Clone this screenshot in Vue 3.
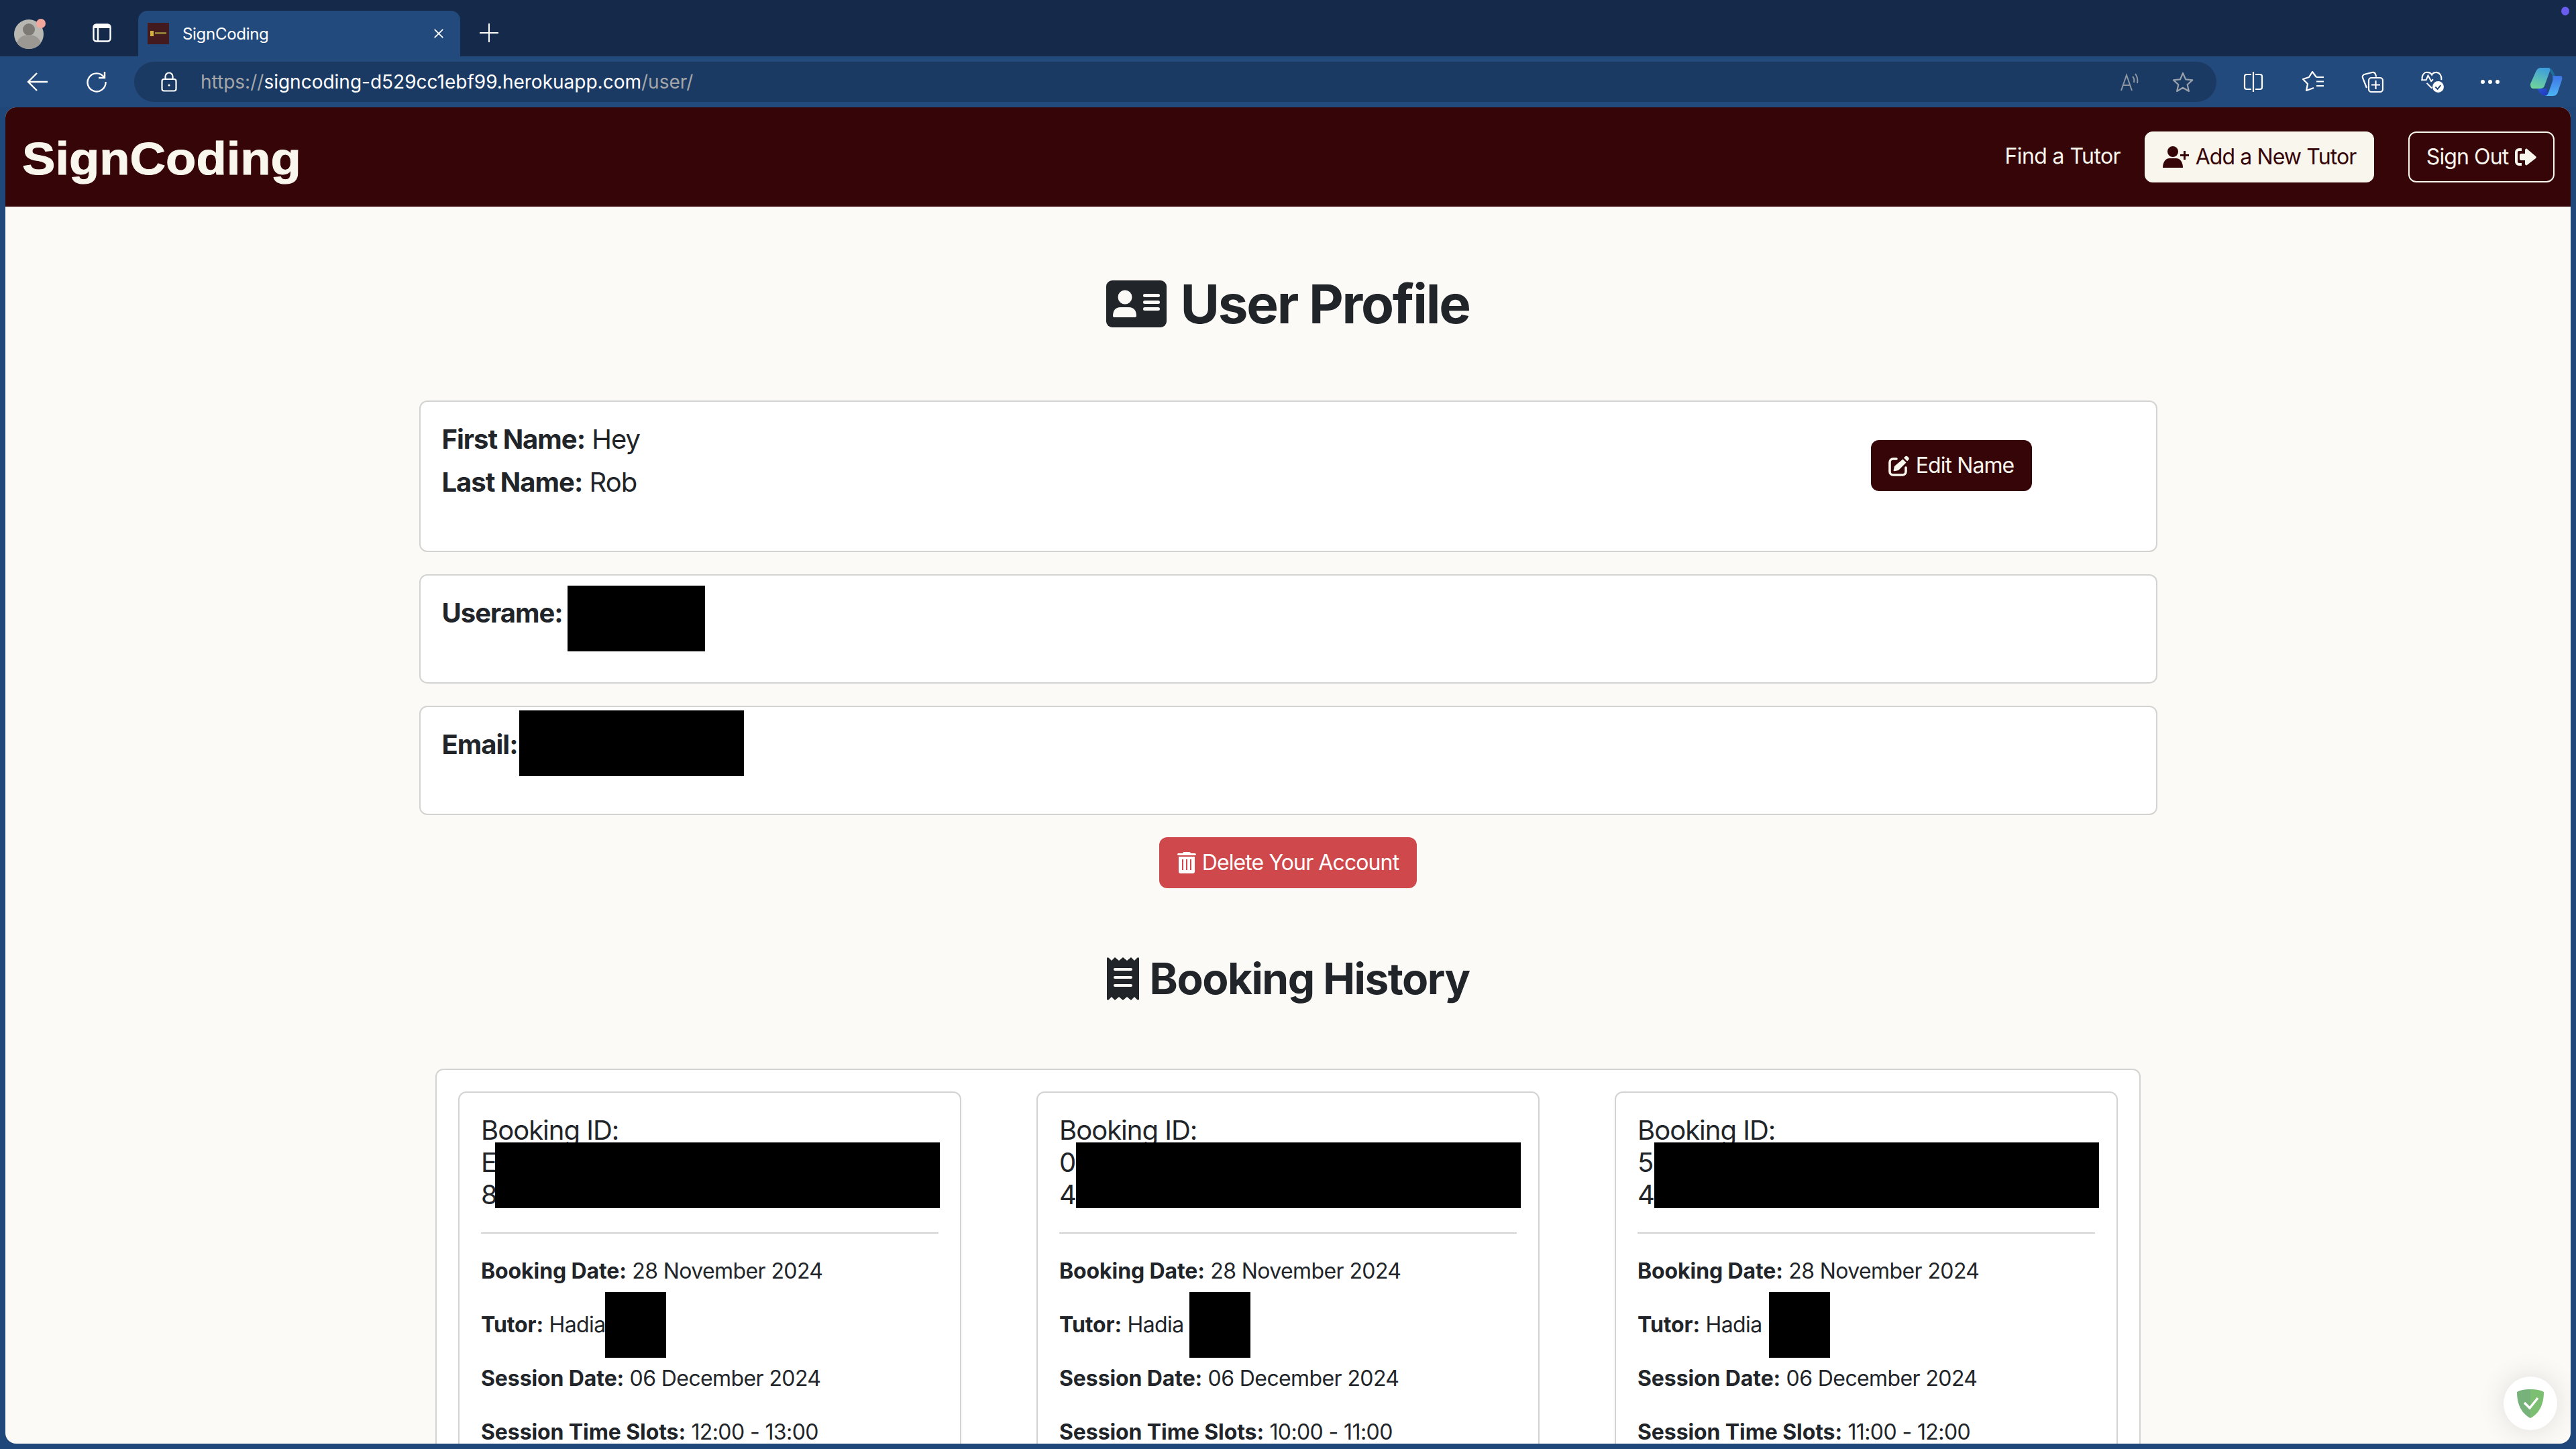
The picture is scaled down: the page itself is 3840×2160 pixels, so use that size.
<template>
  <div class="window">
    <div class="tabstrip">
      <svg class="avatar" viewBox="0 0 50 46">
        <ellipse cx="23" cy="24" rx="22" ry="22" fill="#b9b7b2" />
        <circle cx="23" cy="17" r="9" fill="#7d7a76" />
        <path d="M5 37c3-9 10-12 18-12s15 3 18 12c-4 6-11 9-18 9S9 43 5 37z" fill="#9b9893" />
        <circle cx="41" cy="8" r="7" fill="#f2a79c" />
      </svg>
      <svg class="tab-toggle" viewBox="0 0 28 28" fill="none" stroke="#fff" stroke-width="2.4">
        <rect x="1.5" y="1.5" width="25" height="25" rx="4" />
        <path d="M2 7h24v-2l-3-3H5L2 5z" fill="#fff" stroke="none" />
        <path d="M8 7v19" />
      </svg>
      <div class="tab">
        <svg class="favicon" viewBox="0 0 32 32">
          <rect width="32" height="32" fill="#431a1e" />
          <rect x="4" y="12" width="5" height="8" fill="#d2b23a" />
          <rect x="11" y="14" width="17" height="3" fill="#8f7d38" />
        </svg>
        <span class="tab-title">SignCoding</span>
        <svg class="tab-close" viewBox="0 0 18 18" stroke="#fff" stroke-width="2"><path d="M2 2l14 14M16 2L2 16" /></svg>
      </div>
      <svg class="new-tab" viewBox="0 0 28 28" stroke="#fff" stroke-width="2"><path d="M14 0v28M0 14h28" /></svg>
      <span class="purple-dot"></span>
    </div>

    <div class="toolbar">
      <svg class="tool-left" viewBox="0 0 32 30" fill="none" stroke="#fff" stroke-width="2.4">
        <path d="M31 15H3M15 2L2 15l13 13" />
      </svg>
      <svg class="tool-reload" viewBox="0 0 32 32" fill="none" stroke="#fff" stroke-width="2.4">
        <path d="M27 9A13.5 13.5 0 1 0 29.5 16" />
        <path d="M28 1v9h-9" />
      </svg>
      <div class="address">
        <svg class="lock" viewBox="0 0 24 30" fill="none" stroke="#fff" stroke-width="2.2">
          <rect x="1.5" y="11" width="21" height="17.5" rx="3" />
          <path d="M6.5 11V7a5.5 5.5 0 0 1 11 0v4" />
          <circle cx="12" cy="20" r="1.6" fill="#fff" stroke="none" />
        </svg>
        <span class="url"><span class="dim">https://</span>signcoding-d529cc1ebf99.herokuapp.com<span class="dim">/user/</span></span>
        <svg class="read-aloud" viewBox="0 0 30 28" fill="none" stroke="#8f97a3" stroke-width="2">
          <path d="M2 27L10 4l8 23M5 19h10" />
          <path d="M19 6c2 2 3 5 2 9M23 2c3 4 4 9 3 14" />
        </svg>
        <svg class="star" viewBox="0 0 32 30" fill="none" stroke="#9aa1ab" stroke-width="2.2" stroke-linejoin="round">
          <path d="M16 2l4.2 9.4 10 1-7.5 6.8 2.2 9.8-8.9-5.2-8.9 5.2 2.2-9.8L2 12.4l10-1z" />
        </svg>
      </div>
      <svg class="tool-icon split" viewBox="0 0 30 30" fill="none" stroke="#fff" stroke-width="2.2">
        <path d="M12 4H5a3 3 0 0 0-3 3v16a3 3 0 0 0 3 3h7" />
        <path d="M18 4h7a3 3 0 0 1 3 3v16a3 3 0 0 1-3 3h-7" />
        <path d="M15 0v30" />
      </svg>
      <svg class="tool-icon fav" viewBox="0 0 33 32" fill="none" stroke="#fff" stroke-width="2.2" stroke-linejoin="round">
        <path d="M21 9L15 1 10 9 1 12l7 7-2 10 11-4" />
        <path d="M21 9h11M21 15.500h11M21 22h11" />
      </svg>
      <svg class="tool-icon coll" viewBox="0 0 33 32" fill="none" stroke="#fff" stroke-width="2.2">
        <path d="M8 25L2 10c-.8-2.500.5-4.500 3-5.200l11-2.800c2.500-.6 4.500.5 5.200 3l1 3.500" />
        <rect x="11" y="10" width="21" height="21" rx="4" />
        <path d="M21.500 14v13M15 20.500h13" />
      </svg>
      <svg class="tool-icon health" viewBox="0 0 37 34" fill="none" stroke="#fff" stroke-width="2.200">
        <path d="M2 14C0 6 6 1 10 2c3 0 6 2 7 4 1-2 4-4 7-4 5 0 9 5 8 12" />
        <path d="M0 14h8l3-7 5 9 3-3" />
        <path d="M9 19l8 8" />
        <circle cx="27" cy="25" r="9" fill="#fff" stroke="none" />
        <path d="M22.500 25l3.500 3.500 5-6" stroke="#234a7c" />
      </svg>
      <span class="dots"><i></i><i></i><i></i></span>
      <svg class="copilot" viewBox="0 0 48 42">
        <defs>
          <linearGradient id="cpA" x1="0.6" y1="0" x2="0.3" y2="1">
            <stop offset="0" stop-color="#3f9fdc" />
            <stop offset="1" stop-color="#6fd49a" />
          </linearGradient>
          <linearGradient id="cpB" x1="0.5" y1="0" x2="0.5" y2="1">
            <stop offset="0" stop-color="#3f75e6" />
            <stop offset="1" stop-color="#4cb4f5" />
          </linearGradient>
          <linearGradient id="cpC" x1="0" y1="0" x2="1" y2="1">
            <stop offset="0" stop-color="#2a52d8" />
            <stop offset="1" stop-color="#2036b8" />
          </linearGradient>
        </defs>
        <path d="M26 0C31 0 34 4 37 12H33L29 5C30 2 28 0 26 0z" fill="#1f6e99" />
        <path d="M11 31H24L27 42H22C16 41 12 36 11 31z" fill="url(#cpC)" />
        <path d="M16 0H26C29 0 30 2 29 5L21 27C20 30 17 31 14 31H4C1 31 0 28 0 24L8 6C10 2 12 0 16 0z" fill="url(#cpA)" />
        <path d="M33 12H44C47 12 48 14 47 18L41 36C40 40 37 42 33 42H21C24 42 26 40 27 37L33 20C34 17 33 13 33 12z" fill="url(#cpB)" />
      </svg>
    </div>

    <div class="page">
      <nav class="navbar">
        <span class="logo">SignCoding</span>
        <div class="nav-links">
          <a class="nav-link">Find a Tutor</a>
          <a class="btn btn-light">
            <svg class="i-user-plus" viewBox="0 0 40 32" fill="currentColor">
              <circle cx="15" cy="8" r="8" />
              <path d="M0 32c0-8 4-14 10-14h10c6 0 10 6 10 14z" />
              <path d="M31 7h3v5h5v3h-5v5h-3v-5h-5v-3h5z" />
            </svg>
            Add a New Tutor
          </a>
          <a class="btn btn-outline">
            Sign Out
            <svg class="i-sign-out" viewBox="0 0 33 32" fill="currentColor">
              <path d="M11 3H7a6 6 0 0 0-6 6v14a6 6 0 0 0 6 6h4v-4H7a2 2 0 0 1-2-2V9a2 2 0 0 1 2-2h4z" />
              <path d="M19 4l13 11c1 1 1 2 0 3L19 28c-1 1-3 0-3-2v-5H10c-1 0-2-1-2-2v-6c0-1 1-2 2-2h6V6c0-2 2-3 3-2z" />
            </svg>
          </a>
        </div>
      </nav>

      <main class="content">
        <h1 class="title">
          <svg class="i-card" viewBox="0 0 90 70">
            <rect width="90" height="70" rx="9" fill="#212529" />
            <ellipse cx="28" cy="25" rx="10.500" ry="10.500" fill="#fbfaf6" />
            <path d="M10 53c0-8 4-13 11-13h13c7 0 11 5 11 13 0 1-1 2-2 2H12c-1 0-2-1-2-2z" fill="#fbfaf6" />
            <rect x="55" y="20" width="25" height="5" rx="2.500" fill="#fbfaf6" />
            <rect x="55" y="30" width="25" height="5" rx="2.500" fill="#fbfaf6" />
            <rect x="55" y="40" width="25" height="5" rx="2.500" fill="#fbfaf6" />
          </svg>
          User Profile
        </h1>

        <section class="info-card name-card">
          <div>
            <h5><strong>First Name:</strong> Hey</h5>
            <h5><strong>Last Name:</strong> Rob</h5>
          </div>
          <a class="btn btn-dark edit-btn">
            <svg class="i-edit" viewBox="0 0 32 32">
              <path d="M12 6H7a5 5 0 0 0-5 5v14a5 5 0 0 0 5 5h14a5 5 0 0 0 5-5v-6" fill="none" stroke="currentColor" stroke-width="3.600" stroke-linecap="round" />
              <path d="M25 2.500c1-1 2.500-1 3.500 0l1.500 1.500c1 1 1 2.500 0 3.500l-2 2-5-5zM21.500 6.500l5 5-11 11c-.5.5-1 .7-1.500.8l-5 1c-.8.2-1.500-.5-1.300-1.300l1-5c.1-.5.3-1 .8-1.500z" fill="currentColor" />
            </svg>
            Edit Name
          </a>
        </section>

        <section class="info-card short-card">
          <h5><strong>Userame:</strong></h5>
          <span class="redact username-redact"></span>
        </section>

        <section class="info-card short-card">
          <h5><strong>Email:</strong></h5>
          <span class="redact email-redact"></span>
        </section>

        <div class="delete-row">
          <a class="btn btn-danger">
            <svg class="i-trash" viewBox="0 0 28 32" fill="#fff">
              <path d="M10 0h8c1 0 2 1 2 2h6c1 0 2 1 2 1.500S27 5 26 5H2C1 5 0 4.500 0 3.500S1 2 2 2h6c0-1 1-2 2-2z" />
              <path fill-rule="evenodd" d="M2 7h24v22c0 2-1 3-3 3H5c-2 0-3-1-3-3zM7 11v16h2V11zM13 11v16h2V11zM19 11v16h2V11z" />
            </svg>
            Delete Your Account
          </a>
        </div>

        <h2 class="subtitle">
          <svg class="i-receipt" viewBox="0 0 48 64" fill="#212529">
            <path fill-rule="evenodd" d="M0 2c0-2 2-2 3-1l4 4 5-5 6 5 6-5 6 5 6-5 5 5 4-4c1-1 3-1 3 1v60c0 2-2 2-3 1l-4-4-5 5-6-5-6 5-6-5-6 5-5-5-4 4c-1 1-3 1-3-1zM12 16a2 2 0 0 0 0 4h24a2 2 0 0 0 0-4zM12 28a2 2 0 0 0 0 4h24a2 2 0 0 0 0-4zM12 40a2 2 0 0 0 0 4h24a2 2 0 0 0 0-4z" />
          </svg>
          Booking History
        </h2>

        <section class="history">
          <article v-for="b in bookings" :key="b.id" class="booking">
            <h5 class="booking-id">Booking ID:<br />{{ b.idStart }}<br />{{ b.idEnd }}</h5>
            <span class="redact id-redact" :style="{ left: b.idLeft + 'px' }"></span>
            <hr />
            <p><strong>Booking Date:</strong> 28 November 2024</p>
            <p><strong>Tutor:</strong> Hadia</p>
            <span class="redact tutor-redact" :style="{ left: b.tutorLeft + 'px' }"></span>
            <p><strong>Session Date:</strong> 06 December 2024</p>
            <p><strong>Session Time Slots:</strong> {{ b.slot }}</p>
          </article>
        </section>
      </main>

      <button class="shield-btn" type="button">
        <svg viewBox="0 0 40 43">
          <path d="M20 0C12 0 5 1 0 4c0 16 5 31 20 39z" fill="#76b27a" />
          <path d="M20 0c8 0 15 1 20 4 0 16-5 31-20 39z" fill="#7cbf72" />
          <path d="M11 20l8 8 12-15" fill="none" stroke="#fff" stroke-width="3.500" />
        </svg>
      </button>
    </div>
  </div>
</template>

<script setup>
const bookings = [
  { id: 1, idStart: 'E', idEnd: '8', idLeft: 53, tutorLeft: 217, slot: '12:00 - 13:00' },
  { id: 2, idStart: '0', idEnd: '4', idLeft: 57, tutorLeft: 226, slot: '10:00 - 11:00' },
  { id: 3, idStart: '5', idEnd: '4', idLeft: 57, tutorLeft: 228, slot: '11:00 - 12:00' },
]
</script>

<style>
html,
body {
  margin: 0;
  overflow: hidden;
}
</style>

<style scoped>
.window {
  width: 3840px;
  height: 2160px;
  display: flex;
  flex-direction: column;
  background: #20477a;
  font-family: Inter, "Liberation Sans", sans-serif;
  color: #212529;
  overflow: hidden;
}

.tabstrip {
  height: 84px;
  flex: none;
  display: flex;
  align-items: flex-end;
  background: #152a4b;
  position: relative;
}

.avatar {
  width: 50px;
  height: 46px;
  margin: 0 0 11px 20px;
}

.tab-toggle {
  width: 28px;
  height: 28px;
  margin: 0 0 21px 68px;
}

.tab {
  width: 480px;
  height: 68px;
  margin-left: 40px;
  border-radius: 14px 14px 0 0;
  background: #234a7c;
  display: flex;
  align-items: center;
  box-sizing: border-box;
  padding-left: 14px;
  color: #fff;
}

.favicon {
  width: 32px;
  height: 32px;
}

.tab-title {
  margin-left: 20px;
  font-size: 24px;
  letter-spacing: -0.3px;
  width: 374px;
}

.tab-close {
  width: 16px;
  height: 18px;
}

.new-tab {
  width: 28px;
  height: 28px;
  margin: 0 0 21px 29px;
}

.purple-dot {
  position: absolute;
  left: 3818px;
  top: 10px;
  width: 12px;
  height: 13px;
  border-radius: 50%;
  background: #6a5cf0;
}

.toolbar {
  height: 76px;
  flex: none;
  display: flex;
  align-items: center;
  background: #234a7c;
}

.tool-left {
  width: 32px;
  height: 30px;
  margin-left: 40px;
}

.tool-reload {
  width: 32px;
  height: 32px;
  margin-left: 56px;
}

.address {
  width: 3104px;
  height: 60px;
  margin: 0 0 0 40px;
  border-radius: 30px;
  background: #1b3a63;
  display: flex;
  align-items: center;
  box-sizing: border-box;
  padding-left: 40px;
}

.lock {
  width: 24px;
  height: 30px;
}

.url {
  margin-left: 35px;
  font-size: 28px;
  color: #fff;
  width: 2861px;
}

.dim {
  color: #a4a6a9;
}

.read-aloud {
  width: 30px;
  height: 28px;
}

.star {
  width: 32px;
  height: 30px;
  margin-left: 48px;
}

.tool-icon {
  height: 32px;
}

.split {
  width: 30px;
  margin-left: 40px;
}

.fav {
  width: 33px;
  margin-left: 58px;
}

.coll {
  width: 33px;
  margin-left: 55px;
}

.health {
  width: 37px;
  margin-left: 55px;
}

.dots {
  display: flex;
  gap: 5px;
  margin-left: 53px;
}

.dots i {
  width: 6px;
  height: 6px;
  border-radius: 50%;
  background: #fff;
}

.copilot {
  width: 48px;
  height: 42px;
  margin-left: 46px;
}

.page {
  flex: 1;
  min-height: 0;
  margin: 0 8px 8px;
  border-radius: 16px;
  background: #fbfaf6;
  overflow: hidden;
  position: relative;
}

.navbar {
  height: 148px;
  box-sizing: border-box;
  background: #360508;
  display: flex;
  align-items: center;
  justify-content: space-between;
  padding: 0 24px 0 25px;
}

.logo {
  font-family: "Liberation Sans", Arial, sans-serif;
  font-weight: 700;
  font-size: 68px;
  margin-top: 3px;
  color: #f9f6ee;
  transform: scaleX(1.09);
  transform-origin: left center;
  -webkit-text-stroke: 1px #f9f6ee;
}

.nav-links {
  display: flex;
  align-items: center;
}

.nav-link {
  font-size: 32px;
  letter-spacing: -0.6px;
  color: #f9f6ee;
  margin: 0 36px 4px 0;
}

.btn {
  height: 76px;
  box-sizing: border-box;
  display: inline-flex;
  align-items: center;
  justify-content: center;
  gap: 9px;
  font-size: 32px;
  letter-spacing: -0.9px;
  line-height: 48px;
  border-radius: 12px;
  white-space: nowrap;
}

.btn-light {
  width: 342px;
  background: #f9f6ee;
  color: #360508;
}

.btn-outline {
  width: 218px;
  margin-left: 51px;
  border: 2px solid #f9f6ee;
  color: #f9f6ee;
}

.i-user-plus {
  width: 40px;
  height: 32px;
}

.i-sign-out {
  width: 33px;
  height: 32px;
}

.content {
  padding-top: 97px;
}

.title {
  margin: 0 0 96px;
  font-size: 80px;
  line-height: 96px;
  letter-spacing: -2.200px;
  font-weight: 700;
  display: flex;
  align-items: center;
  justify-content: center;
  gap: 20px;
}

.i-card {
  width: 90px;
  height: 70px;
}

.info-card {
  width: 2591px;
  box-sizing: border-box;
  margin: 0 auto 33px;
  padding: 32px;
  background: #fff;
  border: 2px solid #d3d3d2;
  border-radius: 12px;
  position: relative;
}

h5 {
  margin: 0 0 16px;
  font-size: 40px;
  line-height: 48px;
  letter-spacing: -1px;
  font-weight: 400;
}

strong {
  font-weight: 700;
}

.name-card {
  height: 226px;
  display: flex;
  justify-content: space-between;
}

.edit-btn {
  margin: 25px 153px 0 0;
}

.btn-dark {
  width: 240px;
  background: #360508;
  color: #f9f6ee;
}

.i-edit {
  width: 32px;
  height: 32px;
}

.short-card {
  height: 163px;
}

.redact {
  position: absolute;
  background: #000;
}

.username-redact {
  left: 219px;
  top: 15px;
  width: 205px;
  height: 98px;
}

.email-redact {
  left: 147px;
  top: 5px;
  width: 335px;
  height: 98px;
}

.delete-row {
  display: flex;
  justify-content: center;
}

.btn-danger {
  width: 384px;
  background: #cf484c;
  color: #fff;
}

.i-trash {
  width: 28px;
  height: 32px;
}

.subtitle {
  margin: 96px 0;
  font-size: 64px;
  line-height: 77px;
  letter-spacing: -1.500px;
  font-weight: 700;
  display: flex;
  align-items: center;
  justify-content: center;
  gap: 16px;
}

.i-receipt {
  width: 48px;
  height: 64px;
}

.history {
  width: 2542px;
  box-sizing: border-box;
  margin: 0 auto;
  padding: 32px;
  background: #fff;
  border: 2px solid #d3d3d2;
  border-radius: 12px;
  display: grid;
  grid-template-columns: repeat(3, 750px);
  gap: 112px;
}

.booking {
  box-sizing: border-box;
  height: 720px;
  padding: 32px;
  border: 2px solid #d3d3d2;
  border-radius: 12px;
  position: relative;
}

.booking-id {
  margin: 0;
}

.id-redact {
  top: 74px;
  width: 663px;
  height: 98px;
}

.tutor-redact {
  top: 297px;
  width: 91px;
  height: 98px;
}

hr {
  margin: 32px 0;
  border: 0;
  border-top: 2px solid #d3d3d2;
}

p {
  margin: 0 0 32px;
  font-size: 32px;
  line-height: 48px;
  letter-spacing: -0.6px;
}

p strong {
  letter-spacing: -0.1px;
}

.shield-btn {
  position: absolute;
  right: 20px;
  bottom: 20px;
  width: 80px;
  height: 80px;
  padding: 0;
  border: 0;
  border-radius: 50%;
  background: #fff;
  box-shadow: 0 0 40px rgba(0, 0, 0, 0.12);
  display: flex;
  align-items: center;
  justify-content: center;
}

.shield-btn svg {
  width: 40px;
  height: 43px;
}
</style>
